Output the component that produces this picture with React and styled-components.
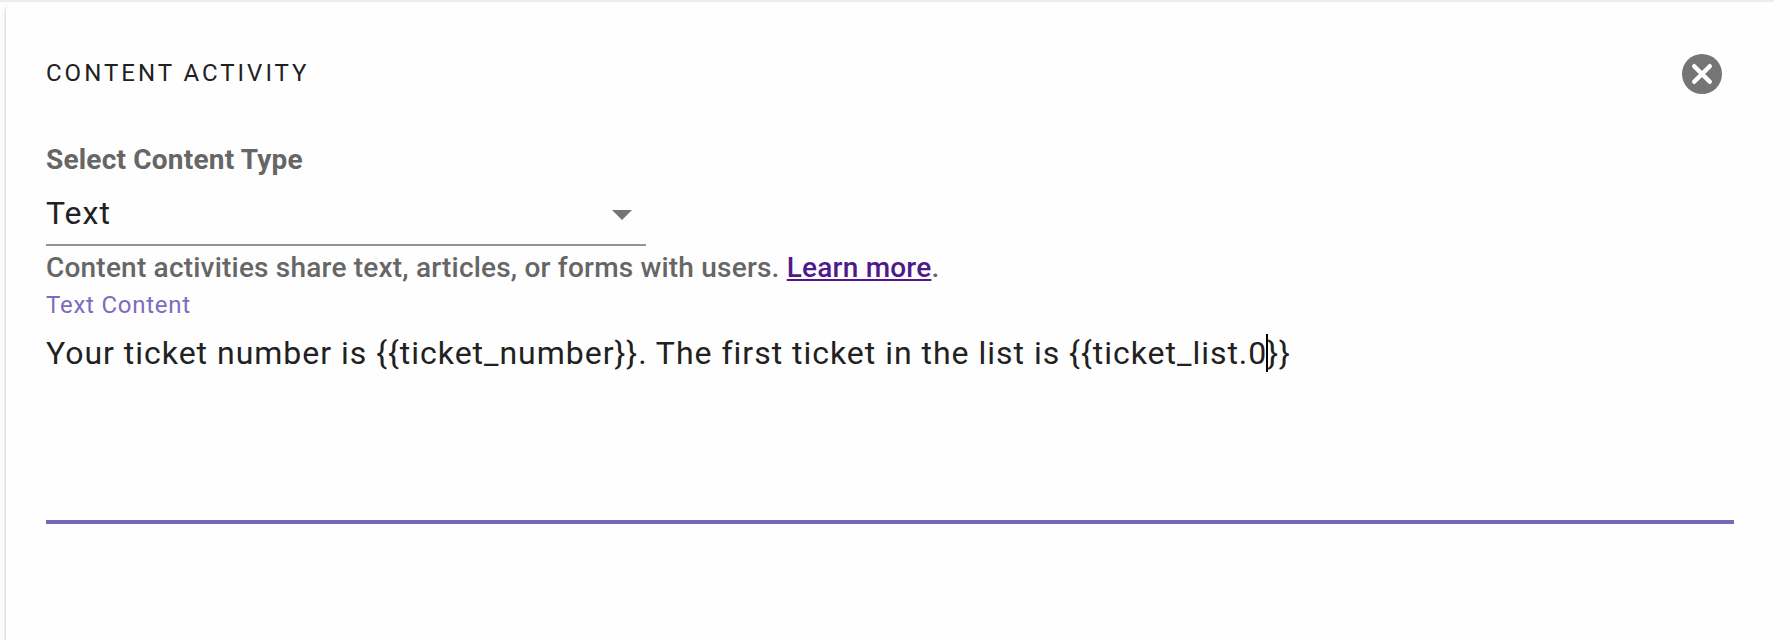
import React from 'react';
import styled, { createGlobalStyle } from 'styled-components';

const GlobalStyle = createGlobalStyle`
  * {
    box-sizing: border-box;
  }
  body {
    margin: 0;
    background: #fefefe;
    font-family: Roboto, sans-serif;
    overflow: hidden;
  }
`;

const Page = styled.div`
  height: 640px;
  padding-right: 16px;
  overflow: hidden;
`;

const TopRule = styled.div`
  height: 2px;
  background: #ededed;
`;

const Panel = styled.section`
  height: 660px;
  margin-left: 6px;
  padding: 50px 40px 0;
  background: #fefefe;
  border-radius: 8px;
  box-shadow: -1px 2px 2px rgba(0, 0, 0, 0.12), -2px 4px 6px rgba(0, 0, 0, 0.05);
  clip-path: inset(0 0 0 -6px);
`;

const Header = styled.header`
  display: flex;
  justify-content: space-between;
  height: 90px;
`;

const Title = styled.h1`
  margin: 5px 0 0;
  color: #212121;
  font-size: 24px;
  font-weight: 400;
  line-height: 32px;
  letter-spacing: 3px;
`;

const CloseButton = styled.button`
  width: 40px;
  height: 40px;
  margin: 2px 12px 0 0;
  padding: 0;
  border: 0;
  background: none;

  svg {
    display: block;
  }
`;

const Label = styled.label`
  display: block;
  color: #666;
  font-size: 28px;
  font-weight: 700;
  line-height: 36px;
  letter-spacing: 0.2px;
`;

const Select = styled.div`
  display: flex;
  align-items: center;
  justify-content: space-between;
  width: 600px;
  height: 68px;
  padding: 4px 14px 0 0;
  border-bottom: 2px solid #949494;
  color: #212121;
  font-size: 32px;
  letter-spacing: 1px;

  svg {
    margin-top: 4px;
  }
`;

const HelpText = styled.p`
  margin: 4px 0 0;
  color: #666;
  font-size: 28px;
  font-weight: 500;
  line-height: 36px;
  letter-spacing: 0.205px;
`;

const HelpLink = styled.a`
  color: #4e1a8b;
  text-decoration: underline;
`;

const FieldLabel = styled.div`
  margin-top: 5px;
  color: #7e6bbf;
  font-size: 24px;
  line-height: 28px;
  letter-spacing: 0.76px;
`;

const TextArea = styled.div`
  height: 205px;
  padding-top: 10px;
  border-bottom: 4px solid #7966b8;
  color: #212121;
  font-size: 32px;
  line-height: 48px;
  letter-spacing: 0.985px;
  white-space: pre;
`;

const Caret = styled.span`
  display: inline-block;
  width: 2px;
  height: 38px;
  margin: 0 -1px 0 -1px;
  background: #000;
  vertical-align: -8px;
`;

const App = () => {
  return (
    <Page>
      <GlobalStyle />
      <TopRule />
      <Panel>
        <Header>
          <Title>CONTENT ACTIVITY</Title>
          <CloseButton aria-label="Close">
            <svg width="40" height="40" viewBox="0 0 40 40">
              <circle cx="20" cy="20" r="20" fill="#757575" />
              <path d="M12.2 12.2l15.6 15.6M27.8 12.2L12.2 27.8" stroke="#fff" strokeWidth="4.4" strokeLinecap="round" />
            </svg>
          </CloseButton>
        </Header>

        <Label>Select Content Type</Label>
        <Select>
          Text
          <svg width="20" height="10" viewBox="0 0 20 10" fill="#757575">
            <path d="M0 0h20L10 10z" />
          </svg>
        </Select>
        <HelpText>
          Content activities share text, articles, or forms with users. <HelpLink href="#">Learn more</HelpLink>.
        </HelpText>

        <FieldLabel>Text Content</FieldLabel>
        <TextArea>
          {'Your ticket number is {{ticket_number}}. The first ticket in the list is {{ticket_list.0'}
          <Caret />
          {'}}'}
        </TextArea>
      </Panel>
    </Page>
  );
};

export default App;
